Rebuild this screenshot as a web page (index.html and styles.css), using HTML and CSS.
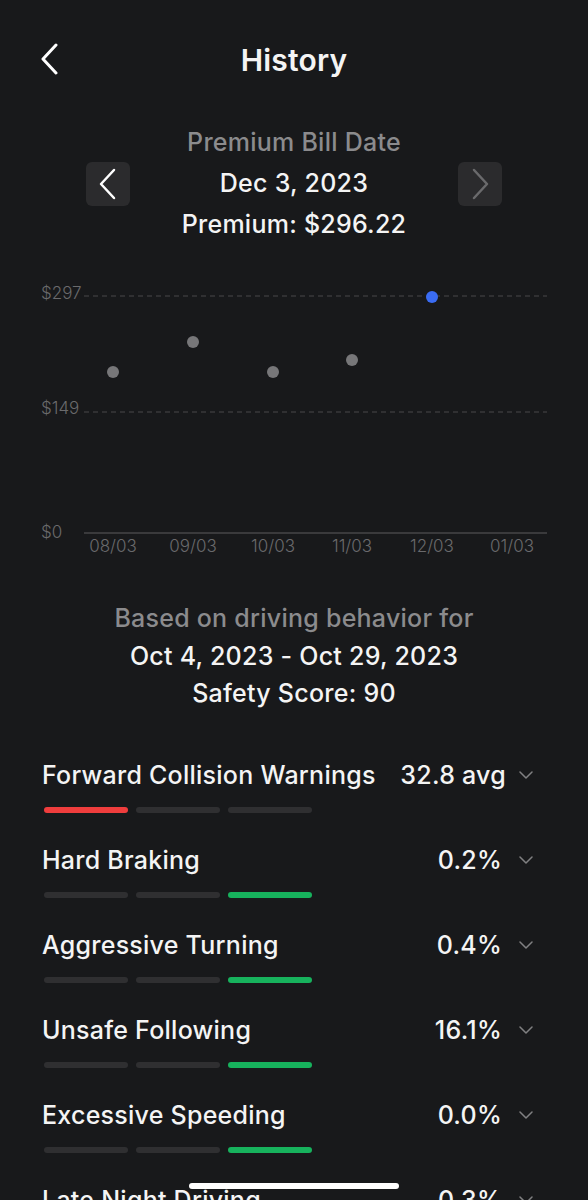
FILE: index.html
```html
<!DOCTYPE html>
<html>
  <head>
    <title>History</title>
    <link rel="stylesheet" href="styles.css">
  </head>
  <body>
    <div class="header">
      <button class="back" type="button">
        <svg width="20" height="32" viewBox="0 0 20 32">
          <path d="M16 2 L3 16 L16 30" fill="none" stroke="#fff" stroke-width="3" stroke-linecap="round" stroke-linejoin="round" />
        </svg>
      </button>
      <h1>History</h1>
    </div>

    <div class="bill">
      <button class="nav-btn" type="button">
        <svg width="20" height="32" viewBox="0 0 20 32">
          <path d="M16 2 L3 16 L16 30" fill="none" stroke="#fff" stroke-width="2.5" stroke-linecap="round" stroke-linejoin="round" />
        </svg>
      </button>
      <div class="bill-text">
        <div class="muted">Premium Bill Date</div>
        <div>Dec 3, 2023</div>
        <div>Premium: $296.22</div>
      </div>
      <button class="nav-btn" type="button">
        <svg width="20" height="32" viewBox="0 0 20 32">
          <path d="M4 2 L17 16 L4 30" fill="none" stroke="#6a6a6c" stroke-width="2.5" stroke-linecap="round" stroke-linejoin="round" />
        </svg>
      </button>
    </div>

    <svg class="chart" width="588" height="290" viewBox="0 0 588 290">
      <g class="axis-label">
        <text x="41" y="29">$297</text>
        <text x="41" y="144">$149</text>
        <text x="41" y="268">$0</text>
      </g>
      <line x1="84" y1="26" x2="547" y2="26" class="grid" />
      <line x1="84" y1="142" x2="547" y2="142" class="grid" />
      <line x1="84" y1="263" x2="547" y2="263" class="base" />
      <g class="axis-label" text-anchor="middle">
        <text x="113" y="282">08/03</text>
        <text x="193" y="282">09/03</text>
        <text x="273" y="282">10/03</text>
        <text x="352" y="282">11/03</text>
        <text x="432" y="282">12/03</text>
        <text x="512" y="282">01/03</text>
      </g>
      <circle cx="113" cy="102" r="6" class="dot" />
      <circle cx="193" cy="72" r="6" class="dot" />
      <circle cx="273" cy="102" r="6" class="dot" />
      <circle cx="352" cy="90" r="6" class="dot" />
      <circle cx="432" cy="27" r="6" class="dot current" />
    </svg>

    <div class="summary">
      <div class="muted">Based on driving behavior for</div>
      <div>Oct 4, 2023 - Oct 29, 2023</div>
      <div>Safety Score: 90</div>
    </div>

    <div class="factors">
      <div class="factor">
        <div class="factor-head">
          <span class="factor-name">Forward Collision Warnings</span>
          <span class="factor-value wide">32.8 avg</span>
          <svg class="caret" width="14" height="8" viewBox="0 0 14 8"><path d="M1 1 L7 7 L13 1" /></svg>
        </div>
        <div class="bars"><span class="bar red"></span><span class="bar"></span><span class="bar"></span></div>
      </div>
      <div class="factor">
        <div class="factor-head">
          <span class="factor-name">Hard Braking</span>
          <span class="factor-value">0.2%</span>
          <svg class="caret" width="14" height="8" viewBox="0 0 14 8"><path d="M1 1 L7 7 L13 1" /></svg>
        </div>
        <div class="bars"><span class="bar"></span><span class="bar"></span><span class="bar green"></span></div>
      </div>
      <div class="factor">
        <div class="factor-head">
          <span class="factor-name">Aggressive Turning</span>
          <span class="factor-value">0.4%</span>
          <svg class="caret" width="14" height="8" viewBox="0 0 14 8"><path d="M1 1 L7 7 L13 1" /></svg>
        </div>
        <div class="bars"><span class="bar"></span><span class="bar"></span><span class="bar green"></span></div>
      </div>
      <div class="factor">
        <div class="factor-head">
          <span class="factor-name">Unsafe Following</span>
          <span class="factor-value">16.1%</span>
          <svg class="caret" width="14" height="8" viewBox="0 0 14 8"><path d="M1 1 L7 7 L13 1" /></svg>
        </div>
        <div class="bars"><span class="bar"></span><span class="bar"></span><span class="bar green"></span></div>
      </div>
      <div class="factor">
        <div class="factor-head">
          <span class="factor-name">Excessive Speeding</span>
          <span class="factor-value">0.0%</span>
          <svg class="caret" width="14" height="8" viewBox="0 0 14 8"><path d="M1 1 L7 7 L13 1" /></svg>
        </div>
        <div class="bars"><span class="bar"></span><span class="bar"></span><span class="bar green"></span></div>
      </div>
      <div class="factor">
        <div class="factor-head">
          <span class="factor-name">Late Night Driving</span>
          <span class="factor-value">0.3%</span>
          <svg class="caret" width="14" height="8" viewBox="0 0 14 8"><path d="M1 1 L7 7 L13 1" /></svg>
        </div>
        <div class="bars"><span class="bar"></span><span class="bar"></span><span class="bar green"></span></div>
      </div>
    </div>

    <div class="home-indicator"></div>
  </body>
</html>
```

FILE: styles.css
```css
body {
  margin: 0;
  background-color: #18191b;
  color: #f4f4f4;
  font-family: Inter, "Noto Sans", sans-serif;
}

button {
  border: none;
  background: none;
  padding: 0;
  cursor: pointer;
}

.header {
  position: relative;
  height: 40px;
  margin-top: 40px;
  display: flex;
  align-items: center;
  justify-content: center;
}

.header h1 {
  margin: 0;
  font-size: 30px;
  font-weight: 600;
  letter-spacing: 0.2px;
}

.back {
  position: absolute;
  left: 40px;
  top: 3px;
  display: flex;
}

.bill {
  display: flex;
  align-items: center;
  justify-content: space-between;
  padding: 0 86px;
  margin-top: 42px;
}

.bill-text {
  text-align: center;
  font-size: 25px;
  font-weight: 500;
  letter-spacing: 0.25px;
  line-height: 41px;
}

.muted {
  color: #8b8b8d;
}

.nav-btn {
  width: 44px;
  height: 44px;
  border-radius: 6px;
  background-color: #2b2b2d;
  display: flex;
  align-items: center;
  justify-content: center;
}

.chart {
  display: block;
  margin-top: 25px;
}

.axis-label {
  fill: #6a6a6c;
  font-size: 17px;
  font-weight: 300;
}

.grid {
  stroke: #48484a;
  stroke-width: 1;
  stroke-dasharray: 5 4;
}

.base {
  stroke: #3a3a3c;
  stroke-width: 2;
}

.dot {
  fill: #777779;
}

.dot.current {
  fill: #3a6cf4;
}

.summary {
  margin-top: 40px;
  text-align: center;
  font-size: 25px;
  font-weight: 500;
  letter-spacing: 0.25px;
  line-height: 37.5px;
}

.factors {
  margin-top: 47px;
  padding: 0 42px;
}

.factor {
  padding-bottom: 32px;
}

.factor-head {
  display: flex;
  align-items: center;
  height: 30px;
  font-size: 25px;
  font-weight: 500;
  letter-spacing: 0.25px;
}

.factor-name {
  flex: 1;
}

.factor-value.wide {
  margin-right: -4px;
}

.caret {
  margin-left: 17px;
  margin-right: 13px;
}

.caret path {
  fill: none;
  stroke: #808082;
  stroke-width: 1.5;
  stroke-linecap: round;
  stroke-linejoin: round;
}

.bars {
  display: flex;
  gap: 8px;
  margin-top: 17px;
  margin-left: 2px;
}

.bar {
  width: 84px;
  height: 6px;
  border-radius: 3px;
  background-color: #2f2f31;
}

.bar.red {
  background-color: #ef3d3d;
}

.bar.green {
  background-color: #17b25d;
}

.home-indicator {
  position: fixed;
  left: 189px;
  bottom: 11px;
  width: 210px;
  height: 6px;
  border-radius: 3px;
  background-color: #fff;
}
```
